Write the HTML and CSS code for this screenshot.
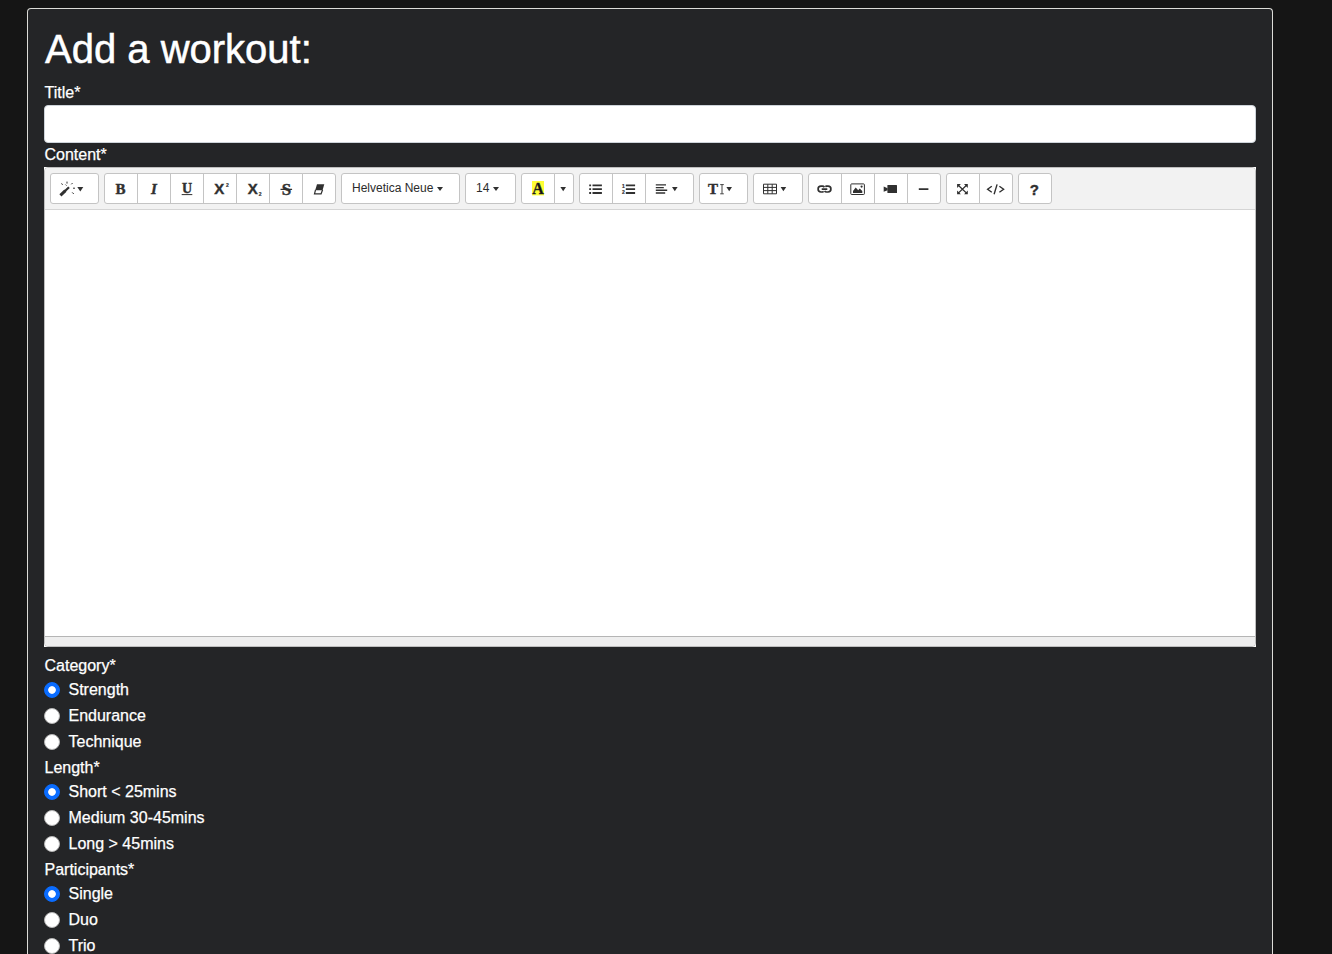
FILE: index.html
```html
<!DOCTYPE html>
<html lang="en">
<head>
<meta charset="utf-8">
<title>Add a workout</title>
<link rel="stylesheet" href="styles.css">
</head>
<body>
<main class="card">
  <h1 class="heading">Add a workout:</h1>
  <form class="form">
    <label class="label" for="title">Title*</label>
    <input class="text-input" id="title" type="text">
    <span class="label">Content*</span>
    <div class="editor">
      <div class="frame">
        <div class="toolbar">
          <div class="group">
            <button type="button" class="btn menu" aria-label="Style"><svg class="icon" viewBox="51 174 47 29"><path d="M60.4 195.4L65.4 190.6" stroke-width="3"/><path d="M64.5 191.5l4.5-4.3" stroke-width="2.2"/><path d="M61.3 183.6l1.5 1M67 181.6v2M72.6 183l-1.3 1.3M73 188.2h2M72.2 192.4l1.6 1.6M65.5 184.6l1 1"/><path class="fill" d="M77.3 187h6l-3 4.4z"/></svg></button>
          </div>
          <div class="group">
            <button type="button" class="btn" aria-label="Bold"><svg class="icon" viewBox="105 174 32 29"><text class="serif" x="115.4" y="194.3">B</text></svg></button>
            <button type="button" class="btn" aria-label="Italic"><svg class="icon" viewBox="138 174 32 29"><text class="serif italic" x="151" y="194.3">I</text></svg></button>
            <button type="button" class="btn" aria-label="Underline"><svg class="icon" viewBox="171 174 32 29"><text class="serif small" x="182" y="192.8">U</text><path d="M181.7 194.6h10.6"/></svg></button>
            <button type="button" class="btn" aria-label="Superscript"><svg class="icon" viewBox="204 174 32 29"><text class="sans" x="214.2" y="194.3">X</text><text class="tiny" x="226" y="187.2">2</text></svg></button>
            <button type="button" class="btn" aria-label="Subscript"><svg class="icon" viewBox="237 174 32 29"><text class="sans" x="247.8" y="194.3">X</text><text class="tiny" x="258.8" y="196.2">2</text></svg></button>
            <button type="button" class="btn" aria-label="Strikethrough"><svg class="icon" viewBox="270 174 32 29"><text class="serif strike" x="281.7" y="194.6">S</text><path d="M280.5 189.4h11.6" stroke-width="1.1"/></svg></button>
            <button type="button" class="btn" aria-label="Clear formatting"><svg class="icon" viewBox="303 174 32 29"><path class="fill" d="M317 184.2h7.3l-1.8 6h-7.3z"/><path d="M315.5 190l-1 3.8h6.6l1.5-4" stroke-width="1.2"/></svg></button>
          </div>
          <div class="group">
            <button type="button" class="btn font">Helvetica Neue<svg class="caret" viewBox="0 0 6 4"><path d="M0 0h6L3 4z"/></svg></button>
          </div>
          <div class="group">
            <button type="button" class="btn size">14<svg class="caret" viewBox="0 0 6 4"><path d="M0 0h6L3 4z"/></svg></button>
          </div>
          <div class="group">
            <button type="button" class="btn" aria-label="Color"><svg class="icon" viewBox="522 174 32 29"><rect class="swatch" x="532" y="181" width="12" height="14.4"/><text class="serif color" x="532.2" y="194.4">A</text></svg></button>
            <button type="button" class="btn drop" aria-label="More colors"><svg class="icon" viewBox="555 174 18 29"><path class="fill" d="M560.4 187h5.6l-2.8 4.2z"/></svg></button>
          </div>
          <div class="group">
            <button type="button" class="btn" aria-label="Bullets"><svg class="icon" viewBox="580 174 32 29"><path stroke-width="1.8" d="M592.5 185.3h9.4M592.5 189.2h9.4M592.5 193h9.4M589.2 185.3h1.9M589.2 189.2h1.9M589.2 193h1.9"/></svg></button>
            <button type="button" class="btn" aria-label="Numbering"><svg class="icon" viewBox="613 174 32 29"><path stroke-width="1.8" d="M625.8 185.3h9.3M625.8 189.2h9.3M625.8 193h9.3"/><text class="tiny" x="622" y="188">1</text><text class="tiny" x="622" y="194.4">2</text></svg></button>
            <button type="button" class="btn menu" aria-label="Paragraph"><svg class="icon" viewBox="646 174 47 29"><path stroke-width="1.4" d="M655.8 184.9h10.2M655.8 187.6h8M655.8 190.3h11.4M655.8 193h9.4"/><path class="fill" d="M672 187h5.6l-2.8 4.2z"/></svg></button>
          </div>
          <div class="group">
            <button type="button" class="btn menu" aria-label="Line height"><svg class="icon" viewBox="700 174 47 29"><text class="serif" x="708" y="194.3">T</text><path stroke-width=".9" d="M722 184.8v8.8M720.2 184.6h3.6M720.2 193.8h3.6"/><path class="fill" d="M726.4 187h5.6l-2.8 4.2z"/></svg></button>
          </div>
          <div class="group">
            <button type="button" class="btn table" aria-label="Table"><svg class="icon" viewBox="754 174 48 29"><path stroke-width="1" d="M763.5 184.2h13v9.6h-13zM763.5 187.4h13M763.5 190.6h13M767.8 184.2v9.6M772.2 184.2v9.6"/><path class="fill" d="M780.6 187h5.6l-2.8 4.2z"/></svg></button>
          </div>
          <div class="group">
            <button type="button" class="btn" aria-label="Link"><svg class="icon" viewBox="809 174 32 29"><path stroke-width="1.7" d="M823.6 191.4l-.8.6h-1.8a2.9 2.9 0 0 1 0-5.8h1.4q1.4 0 2 1M825.4 186.8l.8-.6h1.8a2.9 2.9 0 0 1 0 5.8h-1.4q-1.4 0-2-1M821.7 189.1h5.6"/></svg></button>
            <button type="button" class="btn" aria-label="Picture"><svg class="icon" viewBox="842 174 32 29"><rect x="850.8" y="183.9" width="13.6" height="10.6" rx=".8"/><path class="fill" d="M853 193v-2l2.7-3.6 2.5 2.8 1.5-1.6 2.6 2.4v2z"/><circle class="fill" cx="861.6" cy="186.6" r="1.1"/></svg></button>
            <button type="button" class="btn" aria-label="Video"><svg class="icon" viewBox="875 174 32 29"><rect class="fill" x="887.4" y="185" width="9.6" height="8" rx=".6"/><path class="fill" d="M883.7 186.4l3.9 1.8v2l-3.9 1.6z"/></svg></button>
            <button type="button" class="btn" aria-label="Horizontal rule"><svg class="icon" viewBox="908 174 32 29"><path stroke-width="1.8" d="M918.8 189.1h9.6"/></svg></button>
          </div>
          <div class="group">
            <button type="button" class="btn" aria-label="Full screen"><svg class="icon" viewBox="947 174 32 29"><path stroke-width="1.3" d="M958 185l8.8 8.4M966.8 185l-8.8 8.4"/><path class="fill" d="M957.1 184.1h3.8l-3.8 3.8zM967.8 184.1h-3.8l3.8 3.8zM957.1 194.3h3.8l-3.8-3.8zM967.8 194.3h-3.8l3.8-3.8z"/></svg></button>
            <button type="button" class="btn" aria-label="Code view"><svg class="icon" viewBox="980 174 32 29"><path stroke-width="1.4" d="M991.8 186.2l-4.2 3 4.2 3M999.4 186.2l4.2 3-4.2 3M997.1 184.4l-3 9.8"/></svg></button>
          </div>
          <div class="group">
            <button type="button" class="btn" aria-label="Help"><svg class="icon" viewBox="1019 174 32 29"><text class="sans" x="1029.8" y="194.6">?</text></svg></button>
          </div>
        </div>
        <div class="editing" contenteditable="true"></div>
        <div class="statusbar"></div>
      </div>
    </div>
    <span class="label">Category*</span>
    <label class="option"><input type="radio" name="category" class="radio" checked>Strength</label>
    <label class="option"><input type="radio" name="category" class="radio">Endurance</label>
    <label class="option"><input type="radio" name="category" class="radio">Technique</label>
    <span class="label">Length*</span>
    <label class="option"><input type="radio" name="length" class="radio" checked>Short &lt; 25mins</label>
    <label class="option"><input type="radio" name="length" class="radio">Medium 30-45mins</label>
    <label class="option"><input type="radio" name="length" class="radio">Long &gt; 45mins</label>
    <span class="label">Participants*</span>
    <label class="option"><input type="radio" name="participants" class="radio" checked>Single</label>
    <label class="option"><input type="radio" name="participants" class="radio">Duo</label>
    <label class="option"><input type="radio" name="participants" class="radio">Trio</label>
  </form>
</main>
</body>
</html>
```
FILE: styles.css
```css
* {
  box-sizing: border-box;
}

html {
  height: 100%;
  overflow: hidden;
  background: #151515;
}

body {
  height: 100%;
  margin: 0;
  padding: 8px 59px 0 27px;
  overflow: hidden;
  background: #151515;
  color: #fff;
  font: 16px/24px "Liberation Sans", Arial, sans-serif;
}

.card {
  height: 100%;
  padding: 16px 16px 0;
  overflow: hidden;
  border: 1px solid #dcdcd8;
  border-bottom: 0;
  border-radius: 4px 4px 0 0;
  background: #242527;
}

.heading {
  margin: 0 0 8px;
  padding-left: 1px;
  font-size: 40px;
  font-weight: 400;
  line-height: 48px;
  -webkit-text-stroke: 0.5px #fff;
}

.form {
  display: flex;
  flex-direction: column;
}

.label {
  display: block;
  height: 24px;
  padding-left: 0.5px;
  -webkit-text-stroke: 0.25px #fff;
}

.text-input {
  height: 38px;
  padding: 6px 12px;
  border: 1px solid #ced4da;
  border-radius: 4px;
  background: #fff;
  font: inherit;
}

.editor {
  height: 480px;
  margin-bottom: 7px;
  background: #fff;
}

.frame {
  display: flex;
  flex-direction: column;
  height: 100%;
  overflow: hidden;
  border: 1px solid #bebebe;
  border-radius: 4px;
}

.toolbar {
  display: flex;
  gap: 5px;
  height: 42px;
  padding: 5px;
  border-bottom: 1px solid #d5d5d5;
  background: #f2f2f2;
}

.editing {
  flex: 1;
  outline: none;
}

.statusbar {
  height: 10px;
  border-top: 1px solid #b5b5b5;
  background: #eee;
}

.group {
  display: flex;
  height: 31px;
}

.btn {
  display: flex;
  align-items: center;
  justify-content: center;
  width: 34px;
  height: 31px;
  padding: 0;
  border: 1px solid #c4c4c4;
  background: #fff;
  color: #2b2b2b;
  font: 12px/18px "Liberation Sans", Arial, sans-serif;
}

.btn + .btn {
  margin-left: -1px;
}

.btn:first-child {
  border-radius: 3px 0 0 3px;
}

.btn:last-child {
  border-radius: 0 3px 3px 0;
}

.btn:only-child {
  border-radius: 3px;
}

.menu {
  width: 49px;
}

.table {
  width: 50px;
}

.drop {
  width: 20px;
}

.font,
.size {
  justify-content: flex-start;
  padding: 0 0 2px 10px;
}

.font {
  width: 119px;
}

.size {
  width: 51px;
}

.caret {
  width: 6px;
  height: 4px;
  margin: 3px 0 0 4px;
  fill: #303030;
}

.icon {
  display: block;
  width: 100%;
  height: 29px;
  fill: none;
  stroke: #303030;
  stroke-width: 1;
}

.icon text {
  fill: #303030;
  stroke: #303030;
  stroke-width: 0.4px;
}

.icon .fill {
  fill: #303030;
  stroke: none;
}

.serif {
  font: bold 15px "Liberation Serif", serif;
}

.italic {
  font-style: italic;
}

.small {
  font-size: 14px;
}

.strike {
  font-size: 17px;
}

.sans {
  font: bold 15px "Liberation Sans", sans-serif;
}

.icon .tiny {
  font: bold 5px "Liberation Sans", sans-serif;
  stroke-width: 0.2px;
}

.icon .color {
  fill: #111;
  font-size: 16px;
}

.icon .swatch {
  fill: #ffff35;
  stroke: none;
}

.option {
  display: flex;
  gap: 8.5px;
  height: 24px;
  margin-bottom: 2px;
  -webkit-text-stroke: 0.25px #fff;
}

.option:last-child {
  height: 20px;
  margin-bottom: 0;
}

.radio {
  width: 16px;
  height: 16px;
  margin: 4px 0 0;
  border: 1px solid #b5b5b5;
  border-radius: 50%;
  background: #fff;
  appearance: none;
}

.radio:checked {
  border-color: #0a6cff;
  background: radial-gradient(circle, #fff 3.4px, #0a6cff 4.2px);
}
```
